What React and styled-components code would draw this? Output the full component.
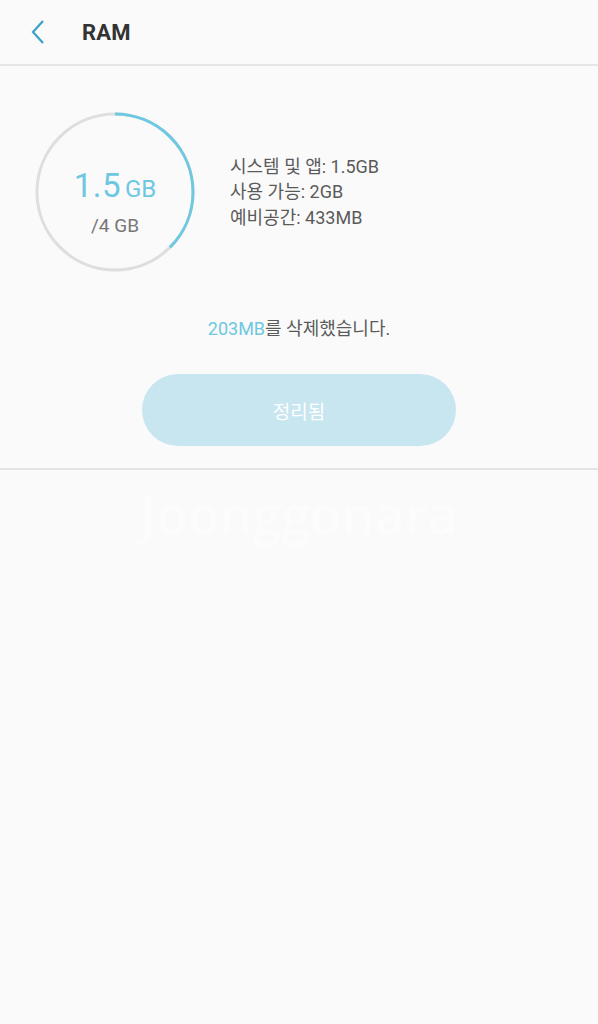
import React from 'react'
import styled, { createGlobalStyle } from 'styled-components'

const GlobalStyle = createGlobalStyle`
  html, body {
    margin: 0;
    padding: 0;
    background: #fafafa;
  }
  body {
    font-family: Roboto, "Noto Sans CJK KR", sans-serif;
    color: #555;
  }
`

const RADIUS = 78
const CIRC = 2 * Math.PI * RADIUS

const Ring = ({ used, total }) => (
  <StyledRing>
    <svg width='160' height='160' viewBox='0 0 160 160'>
      <circle cx='80' cy='80' r={RADIUS} fill='none' stroke='#dedede' strokeWidth='3' />
      <circle
        cx='80'
        cy='80'
        r={RADIUS}
        fill='none'
        stroke='#6ec8e1'
        strokeWidth='3'
        strokeDasharray={`${CIRC * (used / total)} ${CIRC}`}
        transform='rotate(-90 80 80)'
      />
    </svg>
    <div className='label'>
      <p className='used'>
        {used}
        <span>GB</span>
      </p>
      <p className='total'>/{total} GB</p>
    </div>
  </StyledRing>
)

const App = () => (
  <Page>
    <GlobalStyle />
    <Header>
      <BackButton aria-label='back'>
        <svg width='16' height='26' viewBox='0 0 16 26'>
          <path d='M13 2 L3 13 L13 24' fill='none' stroke='#3d9fc5' strokeWidth='2.2' />
        </svg>
      </BackButton>
      <Title>RAM</Title>
    </Header>
    <Section>
      <Summary>
        <Ring used={1.5} total={4} />
        <Stats>
          <li>시스템 및 앱: 1.5GB</li>
          <li>사용 가능: 2GB</li>
          <li>예비공간: 433MB</li>
        </Stats>
      </Summary>
      <Message>
        <span>203MB</span>를 삭제했습니다.
      </Message>
      <CleanButton disabled>정리됨</CleanButton>
    </Section>
    <Watermark>Joonggonara</Watermark>
  </Page>
)

export default App

const Page = styled.div`
  width: 598px;
  min-height: 1024px;
  background: #fafafa;
`

const Header = styled.header`
  height: 66px;
  display: flex;
  align-items: center;
  border-bottom: 2px solid #e6e6e6;
  box-sizing: border-box;
  padding-left: 30px;
`

const BackButton = styled.button`
  background: none;
  border: 0;
  padding: 0;
  width: 18px;
  height: 26px;
  display: flex;
  align-items: center;
`

const Title = styled.h1`
  margin: 0 0 0 34px;
  font-size: 22px;
  font-weight: 700;
  color: #333;
  letter-spacing: 0.2px;
`

const Section = styled.section`
  display: flex;
  flex-direction: column;
  align-items: center;
  padding: 46px 0 22px;
  border-bottom: 2px solid #e4e4e4;
`

const Summary = styled.div`
  align-self: stretch;
  display: flex;
  align-items: center;
  padding-left: 35px;
  gap: 35px;
`

const StyledRing = styled.div`
  position: relative;
  width: 160px;
  height: 160px;

  svg {
    display: block;
  }

  .label {
    position: absolute;
    inset: 0;
    display: flex;
    flex-direction: column;
    align-items: center;
    justify-content: center;
    padding-top: 22px;
    box-sizing: border-box;
  }

  p {
    margin: 0;
  }

  p.used {
    color: #6ec8e1;
    font-size: 33px;
    line-height: 38px;
    letter-spacing: 0.5px;

    span {
      font-size: 24px;
      margin-left: 4px;
      letter-spacing: 0;
    }
  }

  p.total {
    color: #777;
    font-size: 19px;
    line-height: 26px;
    margin-top: 5px;
  }
`

const Stats = styled.ul`
  list-style: none;
  margin: 0;
  padding: 0;
  font-size: 18px;
  line-height: 25.5px;
  color: #5a5a5a;
`

const Message = styled.p`
  margin: 44px 0 0;
  font-size: 18px;
  color: #5a5a5a;
  line-height: 26px;

  span {
    color: #6ec8e1;
  }
`

const CleanButton = styled.button`
  margin-top: 32px;
  width: 314px;
  height: 72px;
  border: 0;
  border-radius: 36px;
  background: #c8e6f0;
  color: #fff;
  font-family: inherit;
  font-size: 19px;
`

const Watermark = styled.div`
  text-align: center;
  font-family: "Open Sans", sans-serif;
  font-weight: 600;
  font-size: 52px;
  color: #fcfcfc;
  margin-top: 8px;
`
